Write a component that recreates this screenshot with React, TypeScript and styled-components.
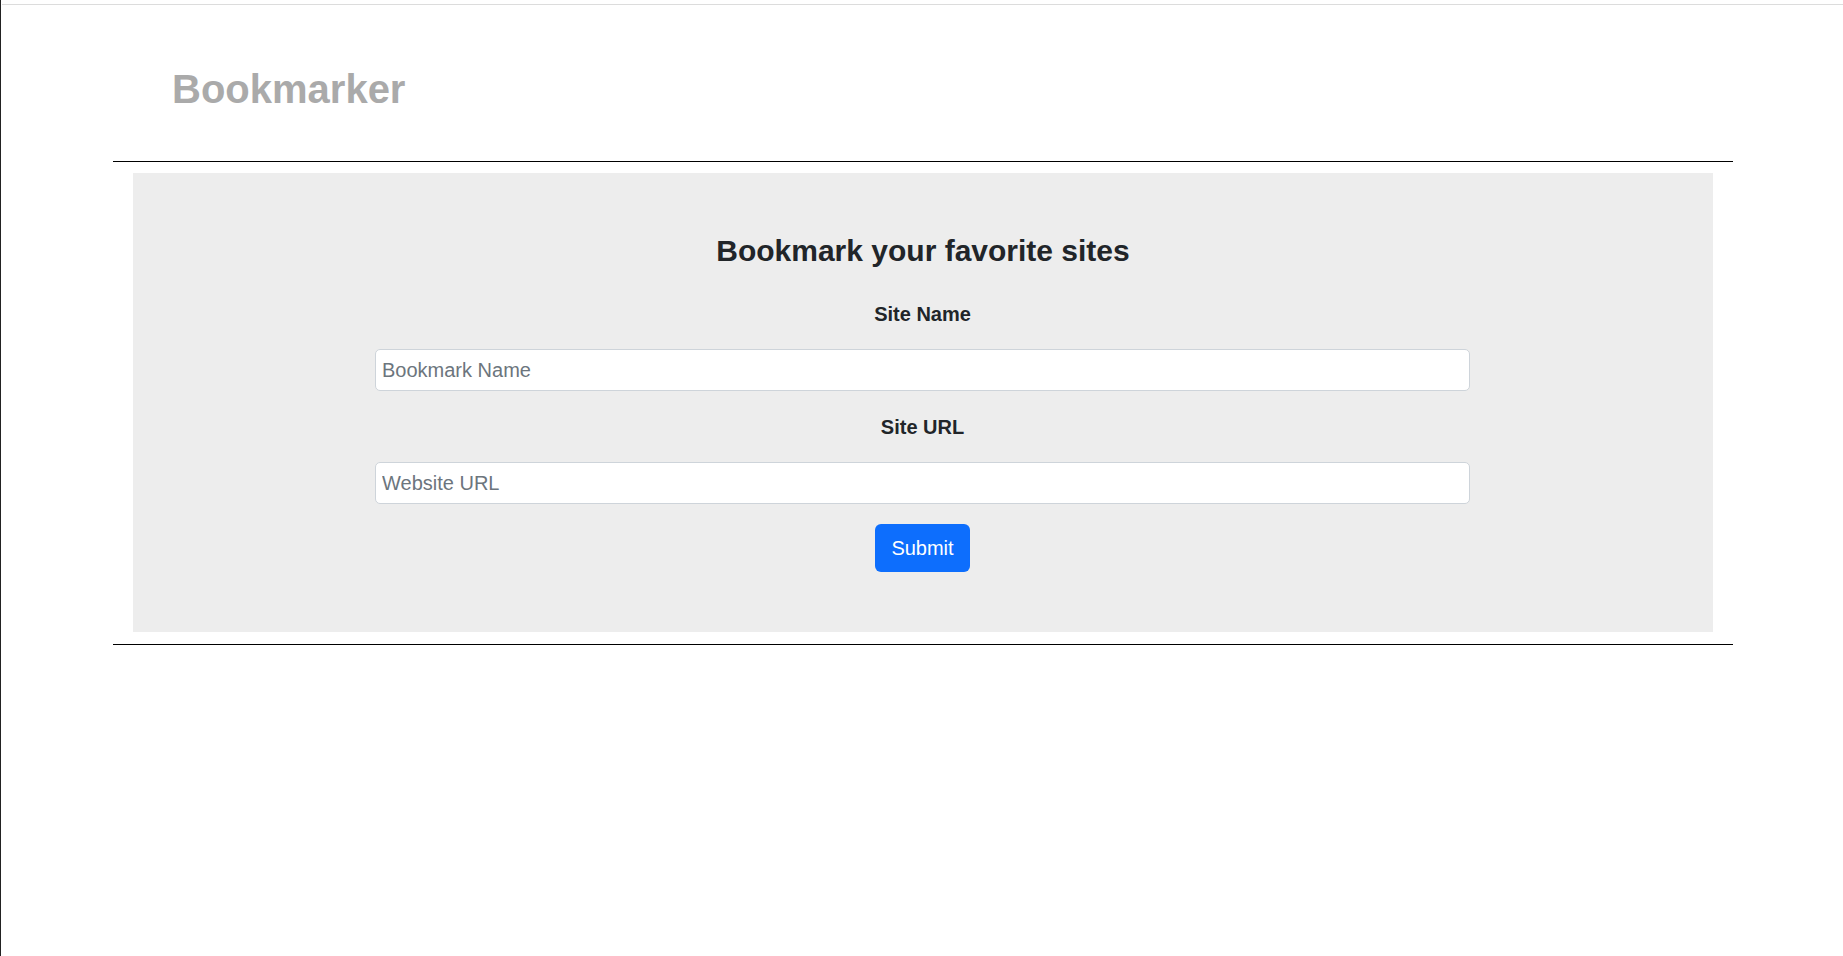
import React from "react";
import styled, { createGlobalStyle } from "styled-components";

const GlobalStyle = createGlobalStyle`
  html, body {
    margin: 0;
    padding: 0;
    background: #ffffff;
    font-family: "Liberation Sans", Arial, Helvetica, sans-serif;
    color: #212529;
  }
  * { box-sizing: border-box; }
`;

const Page = styled.div`
  min-height: 100vh;
  border-left: 1px solid #222222;
  padding-top: 4px;
`;

const TopRule = styled.div`
  height: 1px;
  margin-left: 1px;
  background: #dcdcdc;
`;

const Header = styled.header`
  padding: 60px 0 0 171px;
`;

const Brand = styled.h1`
  margin: 0;
  font-size: 40px;
  line-height: 48px;
  font-weight: 700;
  color: #aaaaaa;
`;

const Container = styled.main`
  width: 1620px;
  margin: 48px 0 0 112px;
`;

const Rule = styled.hr<{ $gap: "top" | "bottom" }>`
  margin: 0;
  border: none;
  border-top: 1px solid #000000;
  ${(p) => (p.$gap === "top" ? "margin-bottom: 11px;" : "margin-top: 12px;")}
`;

const Panel = styled.section`
  margin: 0 20px;
  background: #ededed;
  padding: 60px 0 60px;
  display: flex;
  flex-direction: column;
  align-items: center;
`;

const Heading = styled.h2`
  margin: 0 0 29px;
  font-size: 30px;
  line-height: 36px;
  font-weight: 700;
  color: #212529;
  text-align: center;
`;

const Form = styled.form`
  width: 100%;
  padding-right: 1px;
  display: flex;
  flex-direction: column;
  align-items: center;
  gap: 20px;
`;

const Label = styled.label`
  padding-top: 1px;
  font-size: 20px;
  line-height: 30px;
  font-weight: 700;
  color: #212529;
`;

const Input = styled.input`
  width: 1095px;
  height: 42px;
  padding: 0 6px;
  border: 1px solid #ced4da;
  border-radius: 5px;
  background: #ffffff;
  font-family: "Liberation Sans", Arial, sans-serif;
  font-size: 20px;
  color: #212529;
  outline: none;
  &::placeholder {
    color: #6c757d;
    opacity: 1;
  }
`;

const SubmitButton = styled.button`
  width: 95px;
  height: 48px;
  padding: 0;
  border: none;
  border-radius: 6px;
  background: #0d6efd;
  color: #ffffff;
  font-family: "Liberation Sans", Arial, sans-serif;
  font-size: 20px;
  line-height: 30px;
  cursor: pointer;
`;

export default function App() {
  return (
    <>
      <GlobalStyle />
      <Page>
        <TopRule />
        <Header>
          <Brand>Bookmarker</Brand>
        </Header>
        <Container>
          <Rule $gap="top" />
          <Panel>
            <Heading>Bookmark your favorite sites</Heading>
            <Form onSubmit={(e) => e.preventDefault()}>
              <Label htmlFor="siteName">Site Name</Label>
              <Input id="siteName" type="text" placeholder="Bookmark Name" />
              <Label htmlFor="siteUrl">Site URL</Label>
              <Input id="siteUrl" type="text" placeholder="Website URL" />
              <SubmitButton type="submit">Submit</SubmitButton>
            </Form>
          </Panel>
          <Rule $gap="bottom" />
        </Container>
      </Page>
    </>
  );
}
